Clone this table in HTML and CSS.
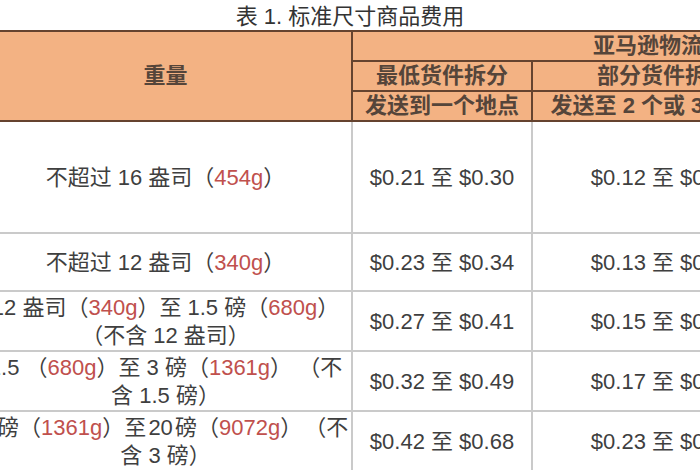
FILE: index.html
```html
<!DOCTYPE html>
<html lang="zh-CN">
<head>
<meta charset="utf-8">
<title>表 1. 标准尺寸商品费用</title>
<link rel="stylesheet" href="styles.css">
</head>
<body>
<div class="page">
  <div class="caption">表 1. 标准尺寸商品费用</div>
  <table class="fees">
    <colgroup>
      <col class="c-weight">
      <col class="c-min">
      <col class="c-part">
      <col class="c-opt">
    </colgroup>
    <thead>
      <tr class="h1">
        <th rowspan="3">重量</th>
        <th colspan="3" class="span-head">亚马逊物流入库配置服务费</th>
      </tr>
      <tr class="h2">
        <th>最低货件拆分</th>
        <th>部分货件拆分</th>
        <th>亚马逊优化货件拆分</th>
      </tr>
      <tr class="h3">
        <th>发送到一个地点</th>
        <th>发送至 2 个或 3 个地点</th>
        <th>发送至 4 个或更多地点</th>
      </tr>
    </thead>
    <tbody>
      <tr class="r1">
        <td>不超过 16 盎司（<span class="g">454g</span>）</td>
        <td>$0.21 至 $0.30</td>
        <td>$0.12 至 $0.17</td>
        <td>免费</td>
      </tr>
      <tr class="r2">
        <td>不超过 12 盎司（<span class="g">340g</span>）</td>
        <td>$0.23 至 $0.34</td>
        <td>$0.13 至 $0.19</td>
        <td>免费</td>
      </tr>
      <tr class="r3">
        <td><span class="ln">12 盎司（<span class="g">340g</span>）至 1.5 磅（<span class="g">680g</span>）</span><br><span class="ln">（不含 12 盎司）</span></td>
        <td>$0.27 至 $0.41</td>
        <td>$0.15 至 $0.23</td>
        <td>免费</td>
      </tr>
      <tr class="r4">
        <td><span class="ln">1.5 （<span class="g">680g</span>）至 3 磅（<span class="g">1361g</span>） （不</span><br><span class="ln">含 1.5 磅）</span></td>
        <td>$0.32 至 $0.49</td>
        <td>$0.17 至 $0.26</td>
        <td>免费</td>
      </tr>
      <tr class="r5">
        <td><span class="ln tight">3 磅（<span class="g">1361g</span>）至 20 磅（<span class="g">9072g</span>） （不</span><br><span class="ln">含 3 磅）</span></td>
        <td>$0.42 至 $0.68</td>
        <td>$0.23 至 $0.37</td>
        <td>免费</td>
      </tr>
    </tbody>
  </table>
</div>
</body>
</html>
```

FILE: styles.css
```css
html, body {
  margin: 0;
  padding: 0;
  background: #ffffff;
}

.page {
  width: 700px;
  height: 470px;
  overflow: hidden;
  font-family: "Liberation Sans", "Noto Sans CJK SC", sans-serif;
  font-size: 22px;
  color: #3f3f3f;
  text-spacing-trim: space-all;
}

.caption {
  height: 26px;
  padding-top: 4px;
  line-height: 26px;
  text-align: center;
  color: #333333;
  white-space: nowrap;
}

.fees {
  border-collapse: collapse;
  table-layout: fixed;
  width: 1077px;
  margin-left: -22px;
}

.c-weight { width: 373px; }
.c-min { width: 180px; }
.c-part { width: 262px; }
.c-opt { width: 262px; }

.fees th {
  background: #f3b283;
  color: #55453a;
  font-weight: bold;
  border: 2px solid #65432f;
  line-height: 26px;
  padding: 0;
  text-align: center;
  white-space: nowrap;
  overflow: hidden;
}

.fees .span-head {
  padding-left: 42px;
}

.h1, .h2, .h3 { height: 30px; }

.fees td {
  border: 2px solid #cacaca;
  text-align: center;
  vertical-align: middle;
  line-height: 28px;
  padding: 2px 0 0 0;
  white-space: nowrap;
  overflow: hidden;
}

.r1 { height: 112px; }
.r2 { height: 58px; }
.r3 { height: 58px; }
.r4 { height: 58px; }
.r5 { height: 58px; }

.ln { white-space: nowrap; }

.tight { word-spacing: -4px; }

.g { color: #c0504d; }
```
